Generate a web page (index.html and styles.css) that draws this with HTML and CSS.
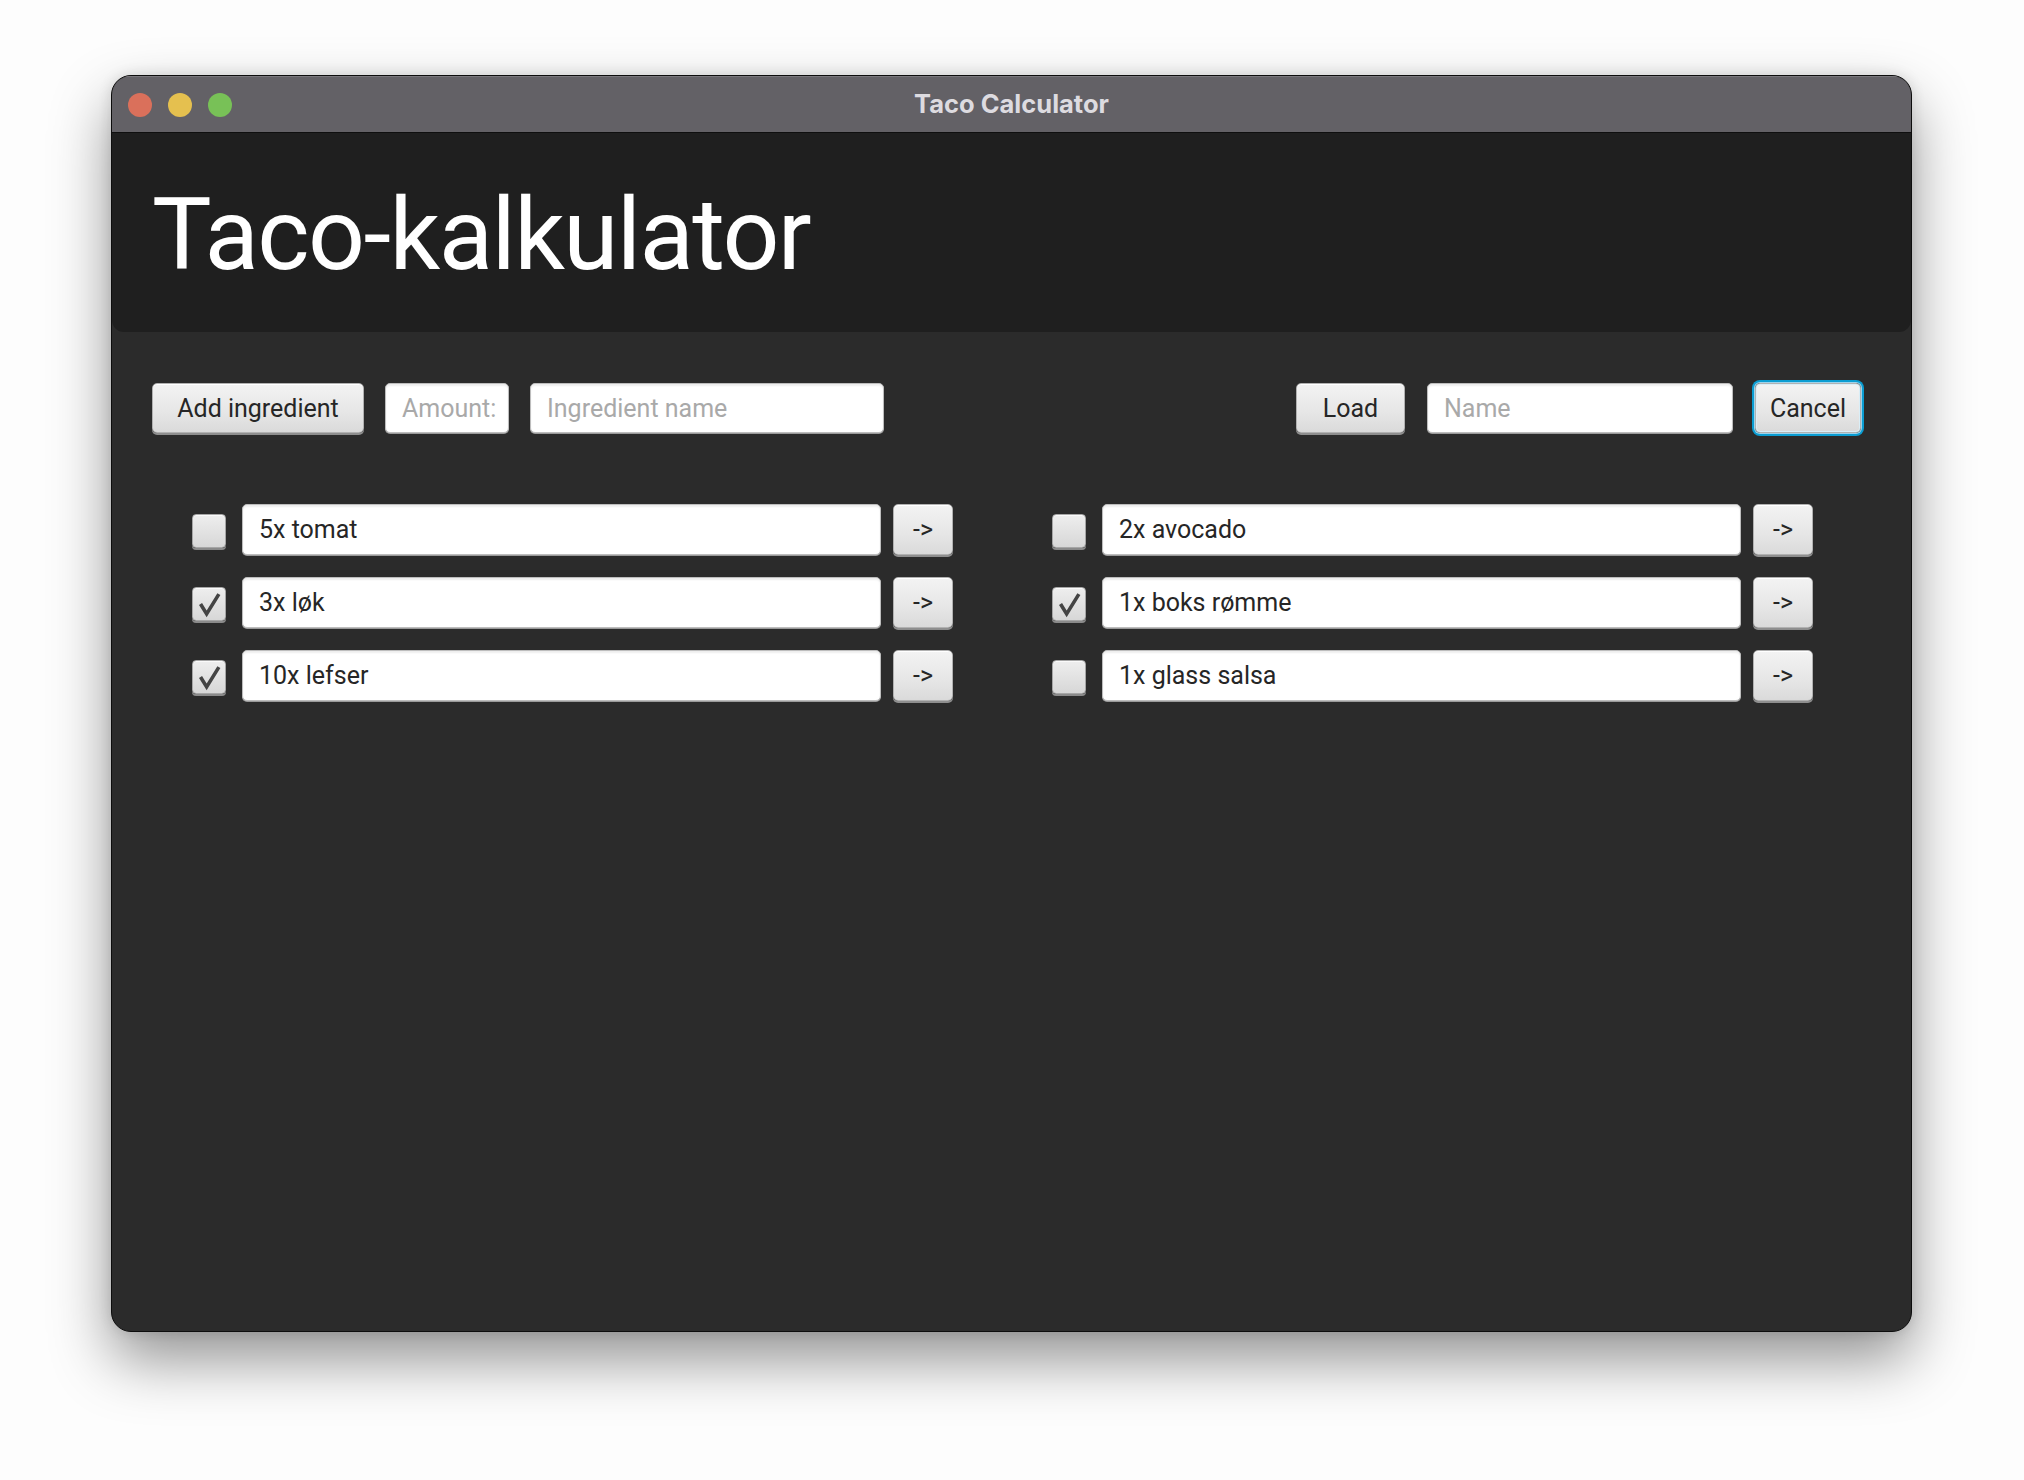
FILE: index.html
```html
<!DOCTYPE html>
<html lang="no">
<head>
<meta charset="utf-8">
<title>Taco Calculator</title>
<link rel="stylesheet" href="styles.css">
</head>
<body>
<div class="window">
  <div class="titlebar">
    <div class="lights">
      <span class="light red"></span>
      <span class="light yellow"></span>
      <span class="light green"></span>
    </div>
    <div class="wtitle">Taco Calculator</div>
    <div class="spacer"></div>
  </div>
  <div class="header">
    <h1 class="apptitle">Taco-kalkulator</h1>
  </div>
  <div class="content">
    <div class="toolbar">
      <div class="group">
        <div class="btn w-add">Add ingredient</div>
        <div class="field w-amount"><span class="ph">Amount:</span></div>
        <div class="field w-ing"><span class="ph">Ingredient name</span></div>
      </div>
      <div class="group right">
        <div class="btn w-load">Load</div>
        <div class="field w-name"><span class="ph">Name</span></div>
        <div class="btn w-cancel focused">Cancel</div>
      </div>
    </div>
    <div class="lists">
      <div class="column">
        <div class="row">
          <div class="check"></div>
          <div class="field item"><span>5x tomat</span></div>
          <div class="btn arrow">-&gt;</div>
        </div>
        <div class="row">
          <div class="check on"><svg viewBox="0 0 34 34"><path d="M8 17 L14.5 27.5 L27.5 6.5"/></svg></div>
          <div class="field item"><span>3x løk</span></div>
          <div class="btn arrow">-&gt;</div>
        </div>
        <div class="row">
          <div class="check on"><svg viewBox="0 0 34 34"><path d="M8 17 L14.5 27.5 L27.5 6.5"/></svg></div>
          <div class="field item"><span>10x lefser</span></div>
          <div class="btn arrow">-&gt;</div>
        </div>
      </div>
      <div class="column">
        <div class="row">
          <div class="check"></div>
          <div class="field item"><span>2x avocado</span></div>
          <div class="btn arrow">-&gt;</div>
        </div>
        <div class="row">
          <div class="check on"><svg viewBox="0 0 34 34"><path d="M8 17 L14.5 27.5 L27.5 6.5"/></svg></div>
          <div class="field item"><span>1x boks rømme</span></div>
          <div class="btn arrow">-&gt;</div>
        </div>
        <div class="row">
          <div class="check"></div>
          <div class="field item"><span>1x glass salsa</span></div>
          <div class="btn arrow">-&gt;</div>
        </div>
      </div>
    </div>
  </div>
</div>
</body>
</html>
```
FILE: styles.css
```css
* { box-sizing: border-box; }
html, body {
  margin: 0;
  padding: 0;
  width: 2024px;
  height: 1480px;
  overflow: hidden;
  background: #fdfdfd;
  font-family: Roboto, "Liberation Sans", sans-serif;
}
.window {
  margin: 75px 0 0 111px;
  width: 1801px;
  height: 1257px;
  border: 1px solid #0d0d0d;
  border-radius: 20px;
  overflow: hidden;
  background: #2b2b2b;
  box-shadow: 0 28px 60px rgba(0, 0, 0, 0.42), 0 0 14px rgba(0, 0, 0, 0.12);
  display: flex;
  flex-direction: column;
}
.titlebar {
  height: 57px;
  flex: none;
  background: #636166;
  border-bottom: 1px solid #0f0f0f;
  display: grid;
  grid-template-columns: 1fr auto 1fr;
  align-items: center;
  box-shadow: inset 0 1px 0 #7a787d;
}
.lights {
  display: flex;
  gap: 16px;
  padding-left: 16px;
  padding-top: 1px;
}
.light {
  width: 24px;
  height: 24px;
  border-radius: 50%;
  display: block;
}
.red { background: #da705b; }
.yellow { background: #e5c04f; }
.green { background: #78c157; }
.wtitle {
  color: #dddbe0;
  font-family: Inter, Roboto, sans-serif;
  font-weight: 700;
  font-size: 25.5px;
  letter-spacing: 0;
  padding-bottom: 2px;
}
.header {
  height: 199px;
  flex: none;
  background: #1f1f1f;
  border-radius: 0 0 12px 12px;
  padding: 52px 0 0 40px;
}
.apptitle {
  margin: 0;
  font-weight: 400;
  font-size: 100px;
  line-height: 100px;
  color: #ffffff;
  letter-spacing: -1.6px;
}
.content {
  flex: 1;
  padding: 51px 50px 0 40px;
}
.toolbar {
  display: flex;
  justify-content: space-between;
  align-items: flex-start;
}
.group {
  display: flex;
  gap: 21px;
  align-items: flex-start;
}
.group.right { gap: 22px; }
.btn {
  height: 50px;
  border: 1px solid #b1b1b1;
  border-radius: 5px;
  background: linear-gradient(to bottom, #f3f3f3 0%, #e6e6e6 60%, #dadada 100%);
  box-shadow: 0 2px 0 #8e8e8e, inset 0 1px 0 #ffffff;
  color: #262626;
  font-size: 25px;
  display: flex;
  align-items: center;
  justify-content: center;
  white-space: nowrap;
}
.field {
  height: 50px;
  border: 1px solid #bdbdbd;
  border-radius: 5px;
  background: #ffffff;
  box-shadow: inset 0 2px 2px rgba(0, 0, 0, 0.07), 0 1px 0 #9a9a9a;
  font-size: 25px;
  color: #262626;
  display: flex;
  align-items: center;
  padding: 0 16px;
  overflow: hidden;
  white-space: nowrap;
}
.ph { color: #a9a9a9; }
.w-add { width: 212px; }
.w-amount { width: 124px; padding: 0 6px 0 16px; }
.w-ing { width: 354px; }
.w-load { width: 109px; }
.w-name { width: 306px; }
.w-cancel { width: 106px; }
.focused {
  box-shadow: 0 0 0 1px #9fd3ea, 0 0 0 3px #0a9dd2, inset 0 0 0 1px #d9eef7;
}
.lists {
  margin-top: 71px;
  padding-left: 40px;
  display: flex;
  gap: 99px;
}
.column {
  display: flex;
  flex-direction: column;
  gap: 22px;
}
.row {
  display: flex;
  align-items: center;
  height: 51px;
}
.check {
  width: 34px;
  height: 34px;
  margin-top: 3px;
  border: 1px solid #a6a6a6;
  border-radius: 4px;
  background: linear-gradient(to bottom, #eeeeee, #d7d7d7);
  box-shadow: 0 2px 0 #8a8a8a, inset 0 1px 0 #fafafa;
  margin-right: 16px;
  flex: none;
}
.check svg {
  display: block;
  width: 32px;
  height: 32px;
}
.check path {
  fill: none;
  stroke: #444444;
  stroke-width: 3.8;
  stroke-linejoin: miter;
  stroke-linecap: butt;
}
.item {
  width: 639px;
  height: 51px;
  margin-right: 12px;
}
.arrow {
  width: 60px;
  height: 51px;
}
```
